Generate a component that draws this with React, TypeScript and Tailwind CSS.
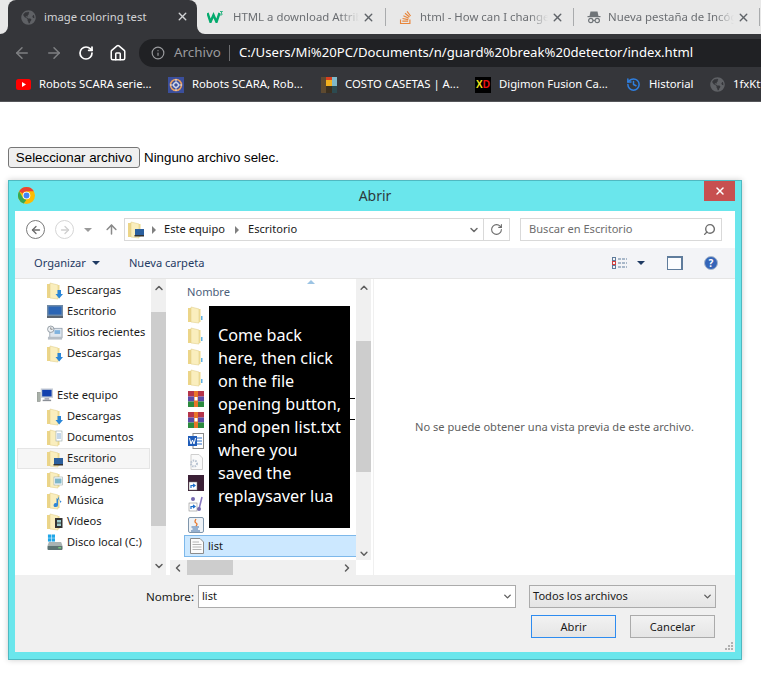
import { ArrowLeft, ArrowRight, ArrowUp, ChevronDown, ChevronLeft, ChevronRight, ChevronUp, History, Home, Info, RotateCw, Search, X } from "lucide-react";
import { FaGlobeAmericas, FaStackOverflow } from "react-icons/fa";

function Flare({ side }: { side: "left" | "right" }) {
  return (
    <svg width="8" height="8" viewBox="0 0 8 8" className={side === "left" ? "absolute bottom-0 left-[-8px]" : "absolute bottom-0 right-[-8px]"}>
      <path d={side === "left" ? "M0 8 A8 8 0 0 0 8 0 V8 Z" : "M8 8 A8 8 0 0 1 0 0 V8 Z"} fill="#35363a" />
    </svg>
  );
}

function W3Icon() {
  return (
    <svg width="16" height="12" viewBox="0 0 16 12">
      <path d="M0.5 2 L3.5 11 L6.5 4 L9.5 11 L12.5 2" fill="none" stroke="#04aa6d" strokeWidth="2.4" />
      <path d="M13 0.5 H15.5 L14 2 Q15.8 2.5 14.8 4 H13" fill="none" stroke="#04aa6d" strokeWidth="0.8" />
    </svg>
  );
}

function IncognitoIcon() {
  return (
    <svg width="14" height="14" viewBox="0 0 14 14" fill="#6f7478">
      <path d="M3.5 1.5 H10.5 L11.5 6 H2.5 Z" />
      <rect x="0.5" y="6" width="13" height="1.2" />
      <circle cx="3.8" cy="10.5" r="2.2" fill="none" stroke="#6f7478" strokeWidth="1.2" />
      <circle cx="10.2" cy="10.5" r="2.2" fill="none" stroke="#6f7478" strokeWidth="1.2" />
      <rect x="5.8" y="10" width="2.4" height="1" />
    </svg>
  );
}

function Tab({ icon, title, wide, titleClass }: { icon: React.ReactNode; title: string; wide: string; titleClass: string }) {
  return (
    <div className={`${wide} h-[34px] flex items-center relative`}>
      <span className="w-[16px] flex justify-center shrink-0">{icon}</span>
      <span className={`${titleClass} overflow-hidden whitespace-nowrap text-[11.4px] text-[#6b6e72] [mask-image:linear-gradient(to_right,black_85%,transparent)]`}>{title}</span>
      <X size={13} strokeWidth={2.6} className="ml-[3px] text-[#5f6368] shrink-0" />
    </div>
  );
}

function Bookmark({ icon, label, width }: { icon: React.ReactNode; label: string; width: string }) {
  return (
    <div className={`${width} flex items-center shrink-0`}>
      <span className="w-[16px] h-[16px] flex items-center justify-center shrink-0">{icon}</span>
      <span className="ml-[8px] text-[11.3px] text-white whitespace-nowrap">{label}</span>
    </div>
  );
}

function ChromeLogo() {
  return (
    <svg width="17" height="17" viewBox="0 0 24 24">
      <circle cx="12" cy="12" r="12" fill="#fbbc05" />
      <path d="M12 0 A12 12 0 0 1 22.4 6 H12 A6 6 0 0 0 6.8 9 L1.6 6 A12 12 0 0 1 12 0 Z" fill="#ea4335" />
      <path d="M1.6 6 L6.8 15 A6 6 0 0 0 12 18 L8 23.3 A12 12 0 0 1 1.6 6 Z" fill="#34a853" />
      <circle cx="12" cy="12" r="5.4" fill="#fff" />
      <circle cx="12" cy="12" r="4.2" fill="#4285f4" />
    </svg>
  );
}

function Folder({ badge }: { badge?: "down" | "desk" | "doc" | "img" | "music" | "video" | "dot" }) {
  return (
    <svg width="16" height="18" viewBox="0 0 16 18" className="shrink-0">
      <path d="M0 2 H5 V16 H0 Z" fill="#ecd588" />
      <path d="M3 1 L11 3 V17 L3 16 Z" fill="#faeebd" stroke="#e3d08e" strokeWidth="0.6" />
      <path d="M11 3 H12.5 V16 H11 Z" fill="#ecd992" />
      {badge === "down" && <path d="M10.5 8 H14 V12 H16 L12.2 16.5 L8.5 12 H10.5 Z" fill="#2a86d8" />}
      {badge === "desk" && <g><rect x="7" y="8" width="9" height="6" fill="#2b5f9e" /><rect x="6.5" y="14" width="9.5" height="1.5" fill="#333" /></g>}
      {badge === "doc" && <g><rect x="9" y="2" width="6" height="10" fill="#fff" stroke="#9aa" strokeWidth="0.6" /><path d="M10 5 H14 M10 7 H14 M10 9 H14" stroke="#6a9ac8" strokeWidth="0.8" /></g>}
      {badge === "img" && <g><rect x="7" y="6" width="8.5" height="8" fill="#fff" stroke="#9aa" strokeWidth="0.6" /><rect x="8" y="7.5" width="6.5" height="5" fill="#7fb7c9" /></g>}
      {badge === "music" && <path d="M11 4 V13 A2.2 2 0 1 1 9.5 11.2 V6 L14.5 9.5 L13.5 11 Z" fill="#2f86d6" />}
      {badge === "video" && <g><rect x="8" y="5" width="7.5" height="10" fill="#333" /><rect x="10" y="7" width="4" height="2.5" fill="#9cc" /><rect x="10" y="10.5" width="4" height="2.5" fill="#9cc" /></g>}
      {badge === "dot" && <rect x="13" y="10" width="1.5" height="4" fill="#5db0e6" />}
    </svg>
  );
}

function SideIcon({ kind }: { kind: string }) {
  if (kind === "desktop")
    return (
      <svg width="16" height="13" viewBox="0 0 16 13" className="shrink-0">
        <rect x="0" y="0" width="16" height="11" fill="#6f8aa6" />
        <rect x="1.5" y="1.5" width="13" height="8" fill="#2c66b5" />
        <rect x="0" y="11" width="16" height="2" fill="#5b6570" />
      </svg>
    );
  if (kind === "recent")
    return (
      <svg width="16" height="16" viewBox="0 0 17 16" className="shrink-0">
        <rect x="3" y="3" width="13" height="10" fill="#dfe6ee" stroke="#8c9aa8" strokeWidth="0.8" />
        <rect x="8" y="5" width="6" height="4" fill="#7fb2de" />
        <rect x="1" y="12" width="15" height="3" fill="#b6bec6" />
        <circle cx="4" cy="4" r="3.4" fill="#eef1f4" stroke="#7b858f" strokeWidth="0.8" />
        <path d="M4 2 V4 H6" stroke="#555" strokeWidth="0.7" fill="none" />
      </svg>
    );
  if (kind === "pc")
    return (
      <svg width="16" height="15" viewBox="0 0 17 15" className="shrink-0">
        <rect x="0" y="4" width="3.5" height="10" fill="#a8b0a8" stroke="#777" strokeWidth="0.4" />
        <rect x="4" y="0" width="13" height="10" fill="#c8ced6" />
        <rect x="5.5" y="1.5" width="10" height="7" fill="#123fae" />
        <rect x="8" y="10" width="5" height="2" fill="#aab" />
        <rect x="6" y="12" width="9" height="1.5" fill="#8a8f96" />
      </svg>
    );
  if (kind === "disk")
    return (
      <svg width="16" height="17" viewBox="0 0 17 17" className="shrink-0">
        <rect x="1" y="0" width="3.5" height="3.5" fill="#1fa6e8" />
        <rect x="5" y="0" width="3.5" height="3.5" fill="#1fa6e8" />
        <rect x="1" y="4" width="3.5" height="3.5" fill="#1fa6e8" />
        <rect x="5" y="4" width="3.5" height="3.5" fill="#1fa6e8" />
        <path d="M2 8 H15 L16.5 12 H0.5 Z" fill="#aab3b3" />
        <rect x="0.5" y="12" width="16" height="4.5" rx="1" fill="#5d7373" />
        <rect x="12" y="13.5" width="3" height="1.2" fill="#7fe07f" />
      </svg>
    );
  return null;
}

function SideRow({ icon, label, selected, indent }: { icon: React.ReactNode; label: string; selected?: boolean; indent?: boolean }) {
  if (selected)
    return (
      <div className="h-[21px] ml-[2px] w-[133px] border border-[#e5e5e5] bg-[#f6f6f6] pl-[29px] flex items-center gap-[4px] text-[#1a1a1a] whitespace-nowrap">
        {icon}
        {label}
      </div>
    );
  return (
    <div className={`h-[21px] flex items-center gap-[4px] text-[#1a1a1a] whitespace-nowrap ${indent ? "pl-[22px]" : "pl-[32px]"}`}>
      {icon}
      {label}
    </div>
  );
}

function FileIcon({ kind }: { kind: string }) {
  if (kind === "rar")
    return (
      <svg width="16" height="16" viewBox="0 0 16 16" className="shrink-0">
        <rect x="0" y="0" width="16" height="5.5" fill="#b5344a" />
        <rect x="0" y="5.5" width="16" height="5" fill="#5a4aa8" />
        <rect x="0" y="10.5" width="16" height="5.5" fill="#2b8a3e" />
        <rect x="6" y="0" width="4" height="16" fill="#e8762a" />
        <rect x="6.5" y="6" width="3" height="3.5" fill="#fff" />
      </svg>
    );
  if (kind === "word")
    return (
      <svg width="16" height="16" viewBox="0 0 16 16" className="shrink-0">
        <rect x="5" y="0.5" width="10.5" height="15" fill="#fff" stroke="#8c8c8c" />
        <path d="M9 5 H14 M9 8 H14 M9 11 H14" stroke="#2b6cc4" />
        <rect x="0" y="3" width="9" height="10" fill="#1f5cb8" />
        <path d="M1.5 5 L3 11 L4.5 7 L6 11 L7.5 5" stroke="#fff" fill="none" />
      </svg>
    );
  if (kind === "config")
    return (
      <svg width="16" height="16" viewBox="0 0 16 16" className="shrink-0">
        <path d="M3 0.5 H11 L14.5 4 V15.5 H3 Z" fill="#fafafa" stroke="#cfcfcf" />
        <circle cx="6" cy="9.5" r="3" fill="none" stroke="#b9c4d2" strokeWidth="2" strokeDasharray="1.5 1" />
      </svg>
    );
  if (kind === "dark")
    return (
      <svg width="16" height="16" viewBox="0 0 16 16" className="shrink-0">
        <rect x="0" y="0" width="16" height="16" fill="#3b2036" />
        <rect x="1" y="7" width="8" height="8" fill="#fff" stroke="#777" strokeWidth="0.5" />
        <path d="M3 13 V10.5 H6 M5 9 L7 10.5 L5 12" stroke="#1c6ec9" strokeWidth="1.2" fill="none" />
      </svg>
    );
  if (kind === "link")
    return (
      <svg width="16" height="16" viewBox="0 0 16 16" className="shrink-0">
        <circle cx="5" cy="3" r="2" fill="#7468b0" />
        <path d="M14 1 L11 13" stroke="#8878c0" strokeWidth="1.6" />
        <circle cx="11" cy="13" r="2" fill="#7468b0" />
        <rect x="1" y="7" width="8" height="8" fill="#fff" stroke="#777" strokeWidth="0.5" />
        <path d="M3 13 V10.5 H6 M5 9 L7 10.5 L5 12" stroke="#1c6ec9" strokeWidth="1.2" fill="none" />
      </svg>
    );
  if (kind === "java")
    return (
      <svg width="16" height="16" viewBox="0 0 16 16" className="shrink-0">
        <rect x="0.5" y="0.5" width="15" height="15" rx="1.5" fill="#eef2f6" stroke="#7f95ab" />
        <path d="M8 2 Q6 5 8 6 Q10 7 8 9" stroke="#e8762a" strokeWidth="1.3" fill="none" />
        <path d="M3.5 10 H11 M4.5 12 H10 M3 14 H12" stroke="#3f6fa8" />
      </svg>
    );
  return (
    <svg width="14" height="16" viewBox="0 0 14 16" className="shrink-0">
      <path d="M0.5 0.5 H10 L13.5 4 V15.5 H0.5 Z" fill="#fbfbfb" stroke="#8c8c8c" />
      <path d="M2.5 4 H9 M2.5 6.5 H11.5 M2.5 9 H11.5 M2.5 11.5 H11.5" stroke="#b4b4b4" />
    </svg>
  );
}

function FileRow({ icon, dash }: { icon: React.ReactNode; dash?: boolean }) {
  return (
    <div className="h-[21px] flex items-center pl-[18px] relative">
      {icon}
      {dash && <span className="absolute left-[180px] top-[10px] w-[5px] h-[1px] bg-black" />}
    </div>
  );
}

const arrowClass = "text-[#5d5d5d]";

export default function App() {
  return (
    <div className="w-[761px] h-[697px] bg-white overflow-hidden font-['Noto_Sans',sans-serif]">
      {/* tab strip */}
      <div className="h-[34px] bg-[#e8e8e8] flex pl-[8px]">
        <div className="w-[189px] h-[34px] bg-[#35363a] rounded-t-[8px] relative flex items-center pl-[13px]">
          <Flare side="left" />
          <Flare side="right" />
          <FaGlobeAmericas size={15} className="text-[#5f6165]" />
          <span className="ml-[8px] text-[11.3px] text-[#d2d3d5] whitespace-nowrap">image coloring test</span>
          <X size={13} strokeWidth={2.6} className="absolute left-[168px] top-[10px] text-[#d2d3d5]" />
        </div>
        <div className="pl-[10px] flex">
          <Tab wide="w-[178px]" titleClass="ml-[10px] w-[126px]" icon={<W3Icon />} title="HTML a download Attribute" />
        </div>
        <div className="w-[1px] h-[18px] mt-[8px] bg-[#a9abad]" />
        <div className="pl-[11px] flex">
          <Tab wide="w-[176px]" titleClass="ml-[7px] w-[128px]" icon={<FaStackOverflow size={15} className="text-[#e8853a]" />} title="html - How can I change" />
        </div>
        <div className="w-[1px] h-[18px] mt-[8px] bg-[#a9abad]" />
        <div className="pl-[12px] flex">
          <Tab wide="w-[173px]" titleClass="ml-[6px] w-[126px]" icon={<IncognitoIcon />} title="Nueva pestaña de Incógnito" />
        </div>
        <div className="w-[1px] h-[18px] mt-[8px] bg-[#a9abad]" />
      </div>

      {/* toolbar */}
      <div className="h-[37px] bg-[#35363a] flex items-center pl-[13px]">
        <ArrowLeft size={18} strokeWidth={2} className="text-[#7f8083]" />
        <ArrowRight size={18} strokeWidth={2} className="ml-[14px] text-[#7f8083]" />
        <RotateCw size={16} strokeWidth={2.6} className="ml-[15px] text-white" />
        <Home size={18} strokeWidth={2} className="ml-[15px] text-white" />
        <div className="ml-[12px] h-[28px] flex-1 bg-[#202124] rounded-l-full flex items-center pl-[11px] text-[13.4px] whitespace-nowrap">
          <Info size={14} className="ml-[1px] text-[#9a9b9e]" />
          <span className="ml-[9px] text-[#9a9b9e]">Archivo</span>
          <span className="ml-[8px] w-[1px] h-[16px] bg-[#6d6e71]" />
          <span className="ml-[9px] text-white text-[13.15px]">C:/Users/Mi%20PC/Documents/n/guard%20break%20detector/index.html</span>
        </div>
      </div>

      {/* bookmarks */}
      <div className="h-[31px] bg-[#35363a] border-b border-[#55565a] flex items-center pb-[3px] pl-[15px] overflow-hidden">
        <Bookmark
          width="w-[153px]"
          label="Robots SCARA serie..."
          icon={
            <svg width="15" height="11" viewBox="0 0 15 11">
              <rect width="15" height="11" rx="2.5" fill="#f00" />
              <path d="M6 3 L10 5.5 L6 8 Z" fill="#fff" />
            </svg>
          }
        />
        <Bookmark
          width="w-[153px]"
          label="Robots SCARA, Rob..."
          icon={
            <svg width="16" height="16" viewBox="0 0 16 16">
              <rect width="16" height="16" fill="#3b4f9c" />
              <circle cx="8" cy="8" r="5.5" fill="none" stroke="#e8a060" strokeWidth="1.6" />
              <circle cx="8" cy="8" r="2.4" fill="none" stroke="#dfe4ef" strokeWidth="1.2" />
              <path d="M8 2 V5 M8 11 V14 M2 8 H5 M11 8 H14" stroke="#dfe4ef" />
            </svg>
          }
        />
        <Bookmark
          width="w-[154px]"
          label="COSTO CASETAS | A..."
          icon={
            <svg width="16" height="16" viewBox="0 0 16 16">
              <rect x="0" y="0" width="5" height="16" fill="#5e4a30" />
              <rect x="5" y="0" width="6" height="9" fill="#f2b01e" />
              <rect x="5" y="0" width="6" height="3" fill="#d8401e" />
              <rect x="5" y="9" width="6" height="7" fill="#3b3020" />
              <rect x="11" y="0" width="5" height="9" fill="#7fb8c8" />
              <rect x="11" y="9" width="5" height="7" fill="#2c4a50" />
            </svg>
          }
        />
        <Bookmark
          width="w-[150px]"
          label="Digimon Fusion Ca..."
          icon={
            <span className="w-[16px] h-[16px] bg-black flex items-center justify-center font-['Liberation_Sans',sans-serif] text-[10px] font-bold leading-none">
              <span className="text-[#f5e31a]">X</span>
              <span className="text-[#e11]">D</span>
            </span>
          }
        />
        <Bookmark width="w-[84px]" label="Historial" icon={<History size={15} strokeWidth={2.4} className="text-[#2f7fe0]" />} />
        <Bookmark width="w-[60px]" label="1fxKtt" icon={<FaGlobeAmericas size={15} className="text-[#5f6165]" />} />
      </div>

      {/* page */}
      <div className="pt-[45px] px-[8px]">
        <div className="flex items-center font-['Liberation_Sans',sans-serif] text-[13.33px] text-black h-[21px]">
          <button className="w-[132px] h-[21px] bg-[#efefef] border border-[#767676] rounded-[3px] text-center whitespace-nowrap">Seleccionar archivo</button>
          <span className="ml-[4px]">Ninguno archivo selec.</span>
        </div>

        {/* file dialog */}
        <div className="mt-[12px] w-[734px] h-[480px] bg-[#6ae6ec] border border-[#4fb9c1] shadow-[0_0_6px_rgba(0,0,0,0.2)] px-[6px] pb-[7px] flex flex-col">
          <div className="h-[30px] grid grid-cols-[1fr_auto_1fr] shrink-0">
            <div className="flex items-center pl-[3px] pb-[2px]">
              <ChromeLogo />
            </div>
            <div className="pt-[4px] text-[14px] text-[#2e3a3c]">Abrir</div>
            <div className="flex justify-end">
              <div className="w-[31px] h-[20px] bg-[#c75050] flex items-center justify-center">
                <X size={12} strokeWidth={3} className="text-white" />
              </div>
            </div>
          </div>

          <div className="flex-1 bg-white flex flex-col text-[11.1px] min-h-0">
            {/* address row */}
            <div className="h-[37px] flex items-center pl-[11px] shrink-0">
              <div className="w-[19px] h-[19px] rounded-full border-[1.5px] border-[#7a7a7a] flex items-center justify-center">
                <ArrowLeft size={12} strokeWidth={2.6} className="text-[#6b6b6b]" />
              </div>
              <div className="ml-[10px] w-[19px] h-[19px] rounded-full border-[1.5px] border-[#d6d6d6] flex items-center justify-center">
                <ArrowRight size={12} strokeWidth={2.6} className="text-[#cfcfcf]" />
              </div>
              <div className="ml-[10px] w-0 h-0 border-x-[4px] border-x-transparent border-t-[4px] border-t-[#9a9a9a]" />
              <ArrowUp size={15} strokeWidth={2.4} className="ml-[12px] text-[#8a8a8a]" />
              <div className="ml-[5px] w-[386px] h-[23px] border border-[#d9d9d9] flex items-center pl-[3px]">
                <Folder badge="desk" />
                <span className="ml-[8px] w-0 h-0 border-y-[4px] border-y-transparent border-l-[4px] border-l-[#808080]" />
                <span className="ml-[8px] text-[#1a1a1a]">Este equipo</span>
                <span className="ml-[10px] w-0 h-0 border-y-[4px] border-y-transparent border-l-[4px] border-l-[#808080]" />
                <span className="ml-[9px] text-[#1a1a1a]">Escritorio</span>
                <div className="ml-auto flex items-center h-full">
                  <ChevronDown size={12} strokeWidth={3} className="text-[#6b6b6b] mr-[3px]" />
                  <div className="w-[1px] h-full bg-[#d9d9d9]" />
                  <RotateCw size={13} strokeWidth={2} className="mx-[6px] text-[#6b6b6b]" />
                </div>
              </div>
              <div className="ml-[10px] w-[202px] h-[23px] border border-[#d9d9d9] flex items-center justify-between pl-[8px] pr-[5px] text-[#6d6d6d]">
                Buscar en Escritorio
                <Search size={13} strokeWidth={2.6} className="text-[#6d6d6d] -scale-x-100" />
              </div>
            </div>

            {/* command bar */}
            <div className="h-[31px] bg-[#f3f4f7] border-b border-[#e5e5e5] flex items-center pl-[19px] text-[#1f3a63] shrink-0">
              <span>Organizar</span>
              <span className="ml-[6px] w-0 h-0 border-x-[4px] border-x-transparent border-t-[4px] border-t-[#1f3a63]" />
              <span className="ml-[29px]">Nueva carpeta</span>
              <div className="ml-auto flex items-center pr-[17px]">
                <svg width="15" height="13" viewBox="0 0 15 13" fill="none">
                  <rect x="0.5" y="0.5" width="3" height="3" stroke="#5f7c9c" />
                  <rect x="0.5" y="4.5" width="3" height="3" stroke="#d04040" />
                  <rect x="0.5" y="8.5" width="3" height="3" stroke="#5f7c9c" />
                  <path d="M6 2 H15 M6 6 H15 M6 10 H15" stroke="#5f7c9c" strokeDasharray="3 1" />
                </svg>
                <span className="ml-[10px] w-0 h-0 border-x-[4px] border-x-transparent border-t-[4px] border-t-[#1f3a63]" />
                <div className="ml-[22px] w-[16px] h-[14px] border border-[#5f7c9c] border-r-2 bg-[#fbfcfe] border-t-2" />
                <div className="ml-[21px] w-[14px] h-[14px] rounded-full bg-[#3465b8] border border-[#a9b8cc] flex items-center justify-center text-white text-[10px] font-bold leading-none">?</div>
              </div>
            </div>

            {/* panes */}
            <div className="h-[296px] flex shrink-0">
              <div className="w-[136px] overflow-hidden pt-[1px]">
                <SideRow icon={<Folder badge="down" />} label="Descargas" />
                <SideRow icon={<SideIcon kind="desktop" />} label="Escritorio" />
                <SideRow icon={<SideIcon kind="recent" />} label="Sitios recientes" />
                <SideRow icon={<Folder badge="down" />} label="Descargas" />
                <div className="h-[21px]" />
                <SideRow indent icon={<SideIcon kind="pc" />} label="Este equipo" />
                <SideRow icon={<Folder badge="down" />} label="Descargas" />
                <SideRow icon={<Folder badge="doc" />} label="Documentos" />
                <SideRow selected icon={<Folder badge="desk" />} label="Escritorio" />
                <SideRow icon={<Folder badge="img" />} label="Imágenes" />
                <SideRow icon={<Folder badge="music" />} label="Música" />
                <SideRow icon={<Folder badge="video" />} label="Vídeos" />
                <SideRow icon={<SideIcon kind="disk" />} label="Disco local (C:)" />
              </div>
              <div className="w-[15px] bg-[#f0f0f0] flex flex-col items-center shrink-0">
                <ChevronUp size={12} strokeWidth={3} className={`mt-[3px] ${arrowClass}`} />
                <div className="mt-[18px] w-full h-[214px] bg-[#cdcdcd]" />
                <ChevronDown size={12} strokeWidth={3} className={`mt-[34px] ${arrowClass}`} />
              </div>
              <div className="w-[4px] shrink-0" />

              {/* file list */}
              <div className="w-[186px] flex flex-col shrink-0">
                <div className="flex-1 relative min-h-0">
                  <div className="h-[25px] pl-[17px] pt-[5px] text-[#4c607a] relative">
                    Nombre
                    <span className="absolute left-[137px] top-[1px] w-0 h-0 border-x-[4px] border-x-transparent border-b-[4px] border-b-[#9cc4e4]" />
                  </div>
                  <FileRow icon={<Folder badge="dot" />} />
                  <FileRow icon={<Folder badge="dot" />} />
                  <FileRow icon={<Folder badge="dot" />} />
                  <FileRow icon={<Folder badge="dot" />} />
                  <FileRow icon={<FileIcon kind="rar" />} dash />
                  <FileRow icon={<FileIcon kind="rar" />} dash />
                  <FileRow icon={<FileIcon kind="word" />} />
                  <FileRow icon={<FileIcon kind="config" />} />
                  <FileRow icon={<FileIcon kind="dark" />} />
                  <FileRow icon={<FileIcon kind="link" />} />
                  <FileRow icon={<FileIcon kind="java" />} />
                  <div className="h-[22px] ml-[14px] bg-[#cce8ff] border border-[#7db8ea] border-r-0 flex items-center pl-[5px] gap-[4px] text-[#1a1a1a]">
                    <FileIcon kind="text" />
                    list
                  </div>
                  {/* note placed over the dialog */}
                  <div className="absolute left-[39px] top-[27px] w-[141px] h-[222px] bg-black text-white text-[16.2px] leading-[23px] pt-[18px] pl-[9px] whitespace-nowrap">
                    Come back
                    <br />
                    here, then click
                    <br />
                    on the file
                    <br />
                    opening button,
                    <br />
                    and open list.txt
                    <br />
                    where you
                    <br />
                    saved the
                    <br />
                    replaysaver lua
                  </div>
                </div>
                <div className="h-[15px] bg-[#f0f0f0] flex items-center relative shrink-0">
                  <ChevronLeft size={12} strokeWidth={3} className={`ml-[2px] ${arrowClass}`} />
                  <div className="ml-[3px] w-[46px] h-full bg-[#cdcdcd]" />
                  <ChevronRight size={12} strokeWidth={3} className={`ml-auto mr-[3px] ${arrowClass}`} />
                </div>
              </div>
              <div className="w-[15px] shrink-0 flex flex-col items-center bg-white">
                <div className="h-[281px] w-full bg-[#f0f0f0] flex flex-col items-center">
                  <ChevronUp size={12} strokeWidth={3} className={`mt-[3px] ${arrowClass}`} />
                  <div className="mt-[47px] w-full h-[136px] bg-[#cdcdcd]" />
                  <ChevronDown size={12} strokeWidth={3} className={`mt-[76px] ${arrowClass}`} />
                </div>
              </div>
              <div className="w-[2px] shrink-0" />
              <div className="flex-1 border-l border-[#f0f0f0] flex items-center justify-center text-[#5f5f5f] whitespace-nowrap">
                No se puede obtener una vista previa de este archivo.
              </div>
            </div>

            {/* footer */}
            <div className="flex-1 bg-[#f0f0f0] relative pt-[10px] text-[#1a1a1a]">
              <div className="flex items-center pl-[131px]">
                <span className="w-[47px] whitespace-nowrap text-[11.6px]">Nombre:</span>
                <div className="ml-[5px] w-[318px] h-[23px] bg-white border border-[#ababab] flex items-center justify-between pl-[3px] pr-[2px]">
                  list
                  <ChevronDown size={11} strokeWidth={3} className={arrowClass} />
                </div>
                <div className="ml-[13px] w-[187px] h-[23px] bg-gradient-to-b from-[#f2f2f2] to-[#e5e5e5] border border-[#ababab] flex items-center justify-between pl-[3px] pr-[2px]">
                  Todos los archivos
                  <ChevronDown size={11} strokeWidth={3} className={arrowClass} />
                </div>
              </div>
              <div className="mt-[7px] flex pl-[516px] gap-[14px]">
                <div className="w-[85px] h-[23px] bg-gradient-to-b from-[#f2f2f2] to-[#e5e5e5] border border-[#2e8cf0] flex items-center justify-center pt-[1px]">Abrir</div>
                <div className="w-[85px] h-[23px] bg-gradient-to-b from-[#f2f2f2] to-[#e5e5e5] border border-[#ababab] flex items-center justify-center pt-[1px]">Cancelar</div>
              </div>
              <svg width="8" height="8" viewBox="0 0 8 8" fill="#b0b0b0" className="absolute right-[2px] bottom-[2px]">
                <rect x="6" y="0" width="2" height="2" />
                <rect x="3" y="3" width="2" height="2" />
                <rect x="6" y="3" width="2" height="2" />
                <rect x="0" y="6" width="2" height="2" />
                <rect x="3" y="6" width="2" height="2" />
                <rect x="6" y="6" width="2" height="2" />
              </svg>
            </div>
          </div>
        </div>
      </div>
    </div>
  );
}
